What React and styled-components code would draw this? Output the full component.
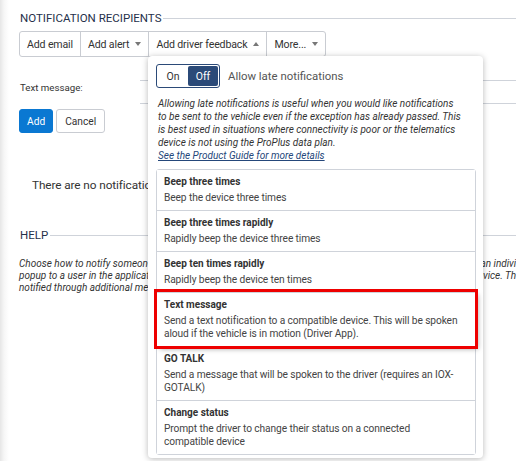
import React from "react";
import styled, { createGlobalStyle } from "styled-components";

const GlobalStyle = createGlobalStyle`
  html, body {
    margin: 0;
    padding: 0;
    width: 516px;
    height: 461px;
    overflow: hidden;
    background: #fff;
  }
  body {
    font-family: Roboto, "Liberation Sans", sans-serif;
    color: #333;
  }
`;

const Page = styled.div`
  position: relative;
  height: 461px;
  background: linear-gradient(to right, #e6e6e6 0px, #f6f6f6 4px, #fff 9px);
  padding: 10px 0 0 19px;
  box-sizing: border-box;
`;

const Section = styled.section`
  margin-bottom: 0;
`;

const SectionHead = styled.div`
  display: flex;
  align-items: center;
  gap: 2px;
  font-size: 11.5px;
  color: #25304a;
  height: 16px;
  padding-left: 1px;

  &::after {
    content: "";
    flex: 1;
    border-top: 1px solid #cfd3da;
  }
`;

const ButtonGroup = styled.div`
  display: inline-flex;
  margin-top: 5px;
  border: 1px solid #c9ccd2;
  border-radius: 3px;
  height: 24px;
  background: #fff;
`;

const GroupButton = styled.div`
  display: flex;
  align-items: center;
  gap: 6px;
  padding: 0 7px;
  font-size: 10.6px;
  letter-spacing: -0.15px;
  color: #333;
  border-left: ${props => (props.first ? "none" : "1px solid #c9ccd2")};
`;

const Caret = styled.span`
  width: 0;
  height: 0;
  border-left: 3px solid transparent;
  border-right: 3px solid transparent;
  ${props =>
    props.up
      ? "border-bottom: 4px solid #777;"
      : "border-top: 4px solid #777;"}
`;

const FieldRow = styled.div`
  display: flex;
  align-items: flex-start;
  margin-top: 23px;
`;

const FieldLabel = styled.div`
  width: 120px;
  font-size: 9.7px;
  color: #333;
  padding-top: 2px;
  padding-left: 1px;
`;

const FieldBox = styled.div`
  flex: 1;
  height: 22px;
  border-top: 1px solid #cfd3da;
  border-bottom: 1px solid #cfd3da;
`;

const Actions = styled.div`
  display: flex;
  gap: 3px;
  margin-top: 5px;
`;

const Button = styled.div`
  height: 24px;
  padding: 0 ${props => (props.primary ? 7 : 8)}px;
  display: flex;
  align-items: center;
  font-size: 10.2px;
  border-radius: 3px;
  box-sizing: border-box;
  color: ${props => (props.primary ? "#fff" : "#333")};
  background: ${props => (props.primary ? "#0a78d2" : "#fff")};
  border: 1px solid ${props => (props.primary ? "#0a78d2" : "#c9ccd2")};
`;

const EmptyNote = styled.div`
  font-size: 11.8px;
  letter-spacing: -0.1px;
  color: #333;
  padding: 45px 0 0 13px;
  height: 49px;
`;

const HelpText = styled.p`
  margin: 15px 0 0;
  font-size: 10px;
  line-height: 12px;
  font-style: italic;
  color: #333;
  white-space: nowrap;
`;

const Popup = styled.div`
  position: absolute;
  left: 148px;
  top: 56px;
  width: 335px;
  height: 402px;
  box-sizing: border-box;
  background: #fff;
  border-radius: 4px;
  box-shadow: 0 1px 6px rgba(0, 0, 0, 0.28);
  padding: 8px 7px 0 8px;
  z-index: 5;
`;

const ToggleRow = styled.div`
  display: flex;
  align-items: center;
  gap: 8px;
`;

const Toggle = styled.div`
  display: flex;
  width: 64px;
  height: 24px;
  box-sizing: border-box;
  border: 1px solid #2b4a78;
  border-radius: 3px;
  padding: 1px;
`;

const ToggleOption = styled.div`
  flex: 1;
  display: flex;
  align-items: center;
  justify-content: center;
  font-size: 10.5px;
  border-radius: 2px;
  color: ${props => (props.active ? "#fff" : "#333")};
  background: ${props => (props.active ? "#2b4a78" : "transparent")};
`;

const ToggleLabel = styled.span`
  font-size: 11.4px;
  color: #555;
`;

const Explain = styled.p`
  margin: 9px 0 0 2px;
  font-size: 10px;
  line-height: 13px;
  font-style: italic;
  color: #333;
  white-space: nowrap;
`;

const GuideLink = styled.a`
  color: #25477a;
  text-decoration: underline;
`;

const OptionList = styled.div`
  margin-top: 7px;
  border: 1px solid #cfd3da;
  border-radius: 3px;
`;

const Option = styled.div`
  position: relative;
  padding: 5px 13px 6px 7px;
  border-top: ${props => (props.first ? "none" : "1px solid #cfd3da")};
  background: #fff;
  ${props =>
    props.highlighted &&
    `
    outline: 3px solid #ee0000;
    box-shadow: 3px 3px 5px rgba(0, 0, 0, 0.35);
    z-index: 2;
  `}
`;

const OptionTitle = styled.div`
  font-size: 10px;
  font-weight: 700;
  color: #333;
  line-height: 13px;
`;

const OptionDesc = styled.div`
  margin-top: 3px;
  font-size: 10.2px;
  letter-spacing: -0.1px;
  line-height: 13px;
  color: #444;
`;

const options = [
  { title: "Beep three times", desc: "Beep the device three times" },
  { title: "Beep three times rapidly", desc: "Rapidly beep the device three times" },
  { title: "Beep ten times rapidly", desc: "Rapidly beep the device ten times" },
  {
    title: "Text message",
    desc: "Send a text notification to a compatible device. This will be spoken aloud if the vehicle is in motion (Driver App).",
    highlighted: true,
  },
  {
    title: "GO TALK",
    desc: "Send a message that will be spoken to the driver (requires an IOX-GOTALK)",
  },
  {
    title: "Change status",
    desc: "Prompt the driver to change their status on a connected compatible device",
  },
];

export default function App() {
  return (
    <>
      <GlobalStyle />
      <Page>
        <Section>
          <SectionHead>NOTIFICATION RECIPIENTS</SectionHead>
          <ButtonGroup>
            <GroupButton first>Add email</GroupButton>
            <GroupButton>
              Add alert <Caret />
            </GroupButton>
            <GroupButton>
              Add driver feedback <Caret up />
            </GroupButton>
            <GroupButton>
              More... <Caret />
            </GroupButton>
          </ButtonGroup>
          <FieldRow>
            <FieldLabel>Text message:</FieldLabel>
            <FieldBox />
          </FieldRow>
          <Actions>
            <Button primary>Add</Button>
            <Button>Cancel</Button>
          </Actions>
          <EmptyNote>There are no notification recipients</EmptyNote>
        </Section>

        <Section>
          <SectionHead>HELP</SectionHead>
          <HelpText>
            Choose how to notify someone when this rule is violated. Notifications can then be sent out as an e-mail to an individual
            <br />
            popup to a user in the application, or even as a feedback directly to the driver through their own in-vehicle device. The
            <br />
            notified through additional methods such as a web request or a distribution list.
          </HelpText>
        </Section>

        <Popup>
          <ToggleRow>
            <Toggle>
              <ToggleOption>On</ToggleOption>
              <ToggleOption active>Off</ToggleOption>
            </Toggle>
            <ToggleLabel>Allow late notifications</ToggleLabel>
          </ToggleRow>
          <Explain>
            Allowing late notifications is useful when you would like notifications
            <br />
            to be sent to the vehicle even if the exception has already passed. This
            <br />
            is best used in situations where connectivity is poor or the telematics
            <br />
            device is not using the ProPlus data plan.
            <br />
            <GuideLink>See the Product Guide for more details</GuideLink>
          </Explain>
          <OptionList>
            {options.map((o, i) => (
              <Option key={o.title} first={i === 0} highlighted={o.highlighted}>
                <OptionTitle>{o.title}</OptionTitle>
                <OptionDesc>{o.desc}</OptionDesc>
              </Option>
            ))}
          </OptionList>
        </Popup>
      </Page>
    </>
  );
}
